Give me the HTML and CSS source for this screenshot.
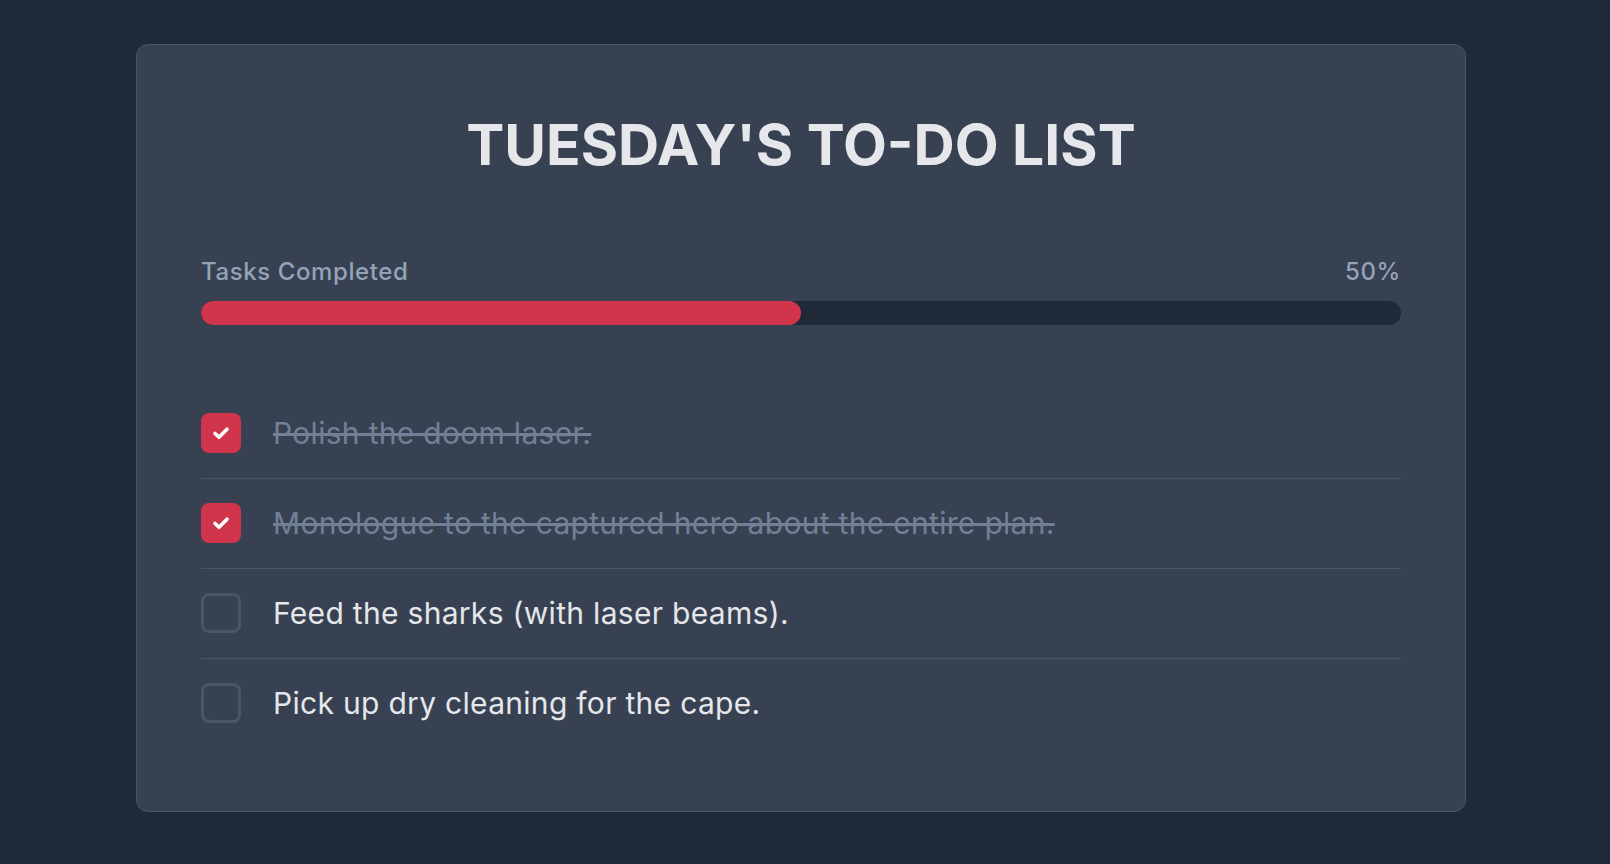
FILE: index.html
```html
<!DOCTYPE html>
<html lang="en">
<head>
    <meta charset="UTF-8">
    <meta name="viewport" content="width=device-width, initial-scale=1.0">
    <title>Tuesday's To-Do List</title>
    <link rel="stylesheet" href="styles.css">
</head>
<body>
    <div class="page">
        <div class="card">
            <!-- title -->
            <h1 class="title">TUESDAY'S TO-DO LIST</h1>

            <!-- progress -->
            <div class="progress">
                <div class="progress-head">
                    <span>Tasks Completed</span>
                    <span>50%</span>
                </div>
                <div class="track">
                    <div class="fill" style="width: 50%"></div>
                </div>
            </div>

            <!-- tasks -->
            <ul class="tasks">
                <li class="task done">
                    <span class="box">
                        <svg width="22" height="22" viewBox="0 0 22 22"><path d="M5 11.5l4 3.8L17 7.2" fill="none" stroke="#fff" stroke-width="3.6" stroke-linecap="round" stroke-linejoin="round"/></svg>
                    </span>
                    <span class="label">Polish the doom laser.</span>
                </li>
                <li class="task done">
                    <span class="box">
                        <svg width="22" height="22" viewBox="0 0 22 22"><path d="M5 11.5l4 3.8L17 7.2" fill="none" stroke="#fff" stroke-width="3.6" stroke-linecap="round" stroke-linejoin="round"/></svg>
                    </span>
                    <span class="label">Monologue to the captured hero about the entire plan.</span>
                </li>
                <li class="task">
                    <span class="box"></span>
                    <span class="label">Feed the sharks (with laser beams).</span>
                </li>
                <li class="task">
                    <span class="box"></span>
                    <span class="label">Pick up dry cleaning for the cape.</span>
                </li>
            </ul>
        </div>
    </div>
</body>
</html>
```

FILE: styles.css
```css
body {
    margin: 0;
    background-color: #1f2937;
    font-family: 'Inter', 'Noto Sans', sans-serif;
    color: #e5e7eb;
}

.page {
    padding: 44px 144px 51px 136px;
}

.card {
    width: 1330px;
    box-sizing: border-box;
    padding: 64px;
    background-color: #374151;
    border: 1px solid #4b5563;
    border-radius: 12px;
}

.title {
    margin: 0 0 75px;
    font-size: 57px;
    line-height: 72px;
    font-weight: 700;
    text-align: center;
    color: #e5e7eb;
}

.progress-head {
    display: flex;
    justify-content: space-between;
    font-size: 24px;
    line-height: 32px;
    font-weight: 500;
    letter-spacing: 0.6px;
    color: #94a3b8;
    margin-bottom: 13px;
}

.track {
    height: 24px;
    border-radius: 12px;
    background-color: #1f2937;
    overflow: hidden;
}

.fill {
    height: 100%;
    border-radius: 12px;
    background-color: #d0354b;
}

.tasks {
    list-style: none;
    margin: 64px 0 0;
    padding: 0;
}

.task {
    display: flex;
    align-items: center;
    gap: 32px;
    padding: 24px 0 25px;
    border-bottom: 1px solid #4b5563;
}

.task:last-child {
    border-bottom: none;
    padding-bottom: 24px;
}

.box {
    width: 40px;
    height: 40px;
    box-sizing: border-box;
    border: 3px solid #4b5563;
    border-radius: 8px;
    display: flex;
    align-items: center;
    justify-content: center;
    flex-shrink: 0;
}

.done .box {
    border: none;
    background-color: #d0354b;
}

.label {
    font-size: 30px;
    line-height: 36px;
    letter-spacing: 0.3px;
    color: #e5e7eb;
}

.done .label {
    color: #718096;
    text-decoration: line-through;
}
```
